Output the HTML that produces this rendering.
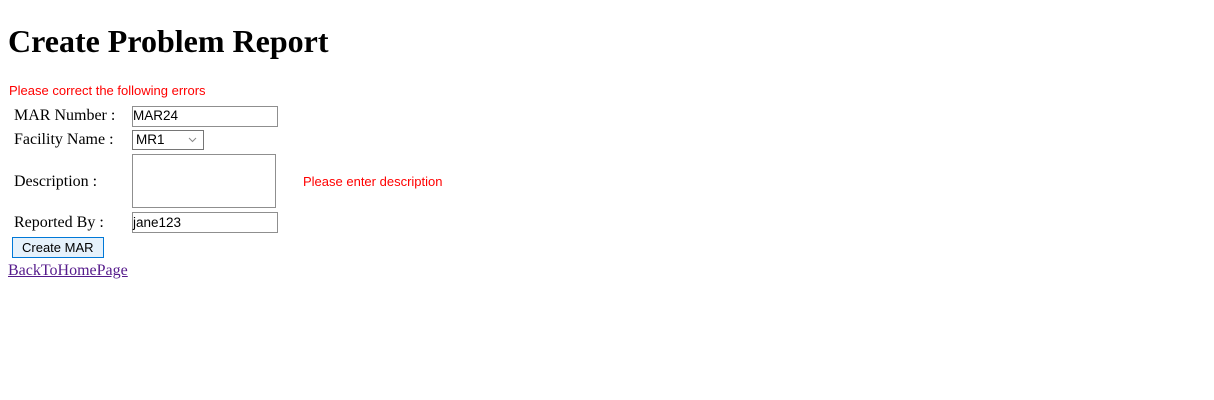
<!DOCTYPE html>
<html><head><style>
body{margin:0;width:1214px;height:400px;background:#fff;font-family:"Liberation Serif",serif;position:relative;overflow:hidden}
.a{position:absolute;white-space:nowrap}
h1{position:absolute;left:8px;top:22px;margin:0;font-size:32px;font-weight:bold;line-height:38px}
.s{font-family:"Liberation Sans",sans-serif;font-size:13px}
.lbl{font-size:16px;line-height:18px}
.box{position:absolute;border:1px solid #767676;box-sizing:border-box;background:#fff}
</style></head><body>
<h1>Create Problem Report</h1>
<div class="a s" style="left:9px;top:83px;color:#f00">Please correct the following errors</div>
<div class="a lbl" style="left:14px;top:107px">MAR Number :</div>
<div class="box" style="left:132px;top:106px;width:146px;height:21px;border-color:#8f8f8f"></div>
<div class="a s" style="left:133px;top:108px;font-size:13.5px">MAR24</div>
<div class="a lbl" style="left:14px;top:131px">Facility Name :</div>
<div class="box" style="left:132px;top:130px;width:72px;height:20px"></div>
<div class="a s" style="left:136px;top:132px;font-size:13.5px">MR1</div>
<svg class="a" style="left:188px;top:137px" width="9" height="6"><path d="M1 1L4.5 4.5L8 1" stroke="#888" fill="none"/></svg>
<div class="a lbl" style="left:14px;top:173px">Description :</div>
<div class="box" style="left:132px;top:154px;width:144px;height:54px;border-color:#8f8f8f"></div>
<div class="a s" style="left:303px;top:174px;color:#f00">Please enter description</div>
<div class="a lbl" style="left:14px;top:214px">Reported By :</div>
<div class="box" style="left:132px;top:212px;width:146px;height:21px;border-color:#8f8f8f"></div>
<div class="a s" style="left:133px;top:215px;font-size:13.5px">jane123</div>
<div class="box" style="left:12px;top:237px;width:92px;height:21px;background:#e5f1fb;border-color:#0078d7"></div>
<div class="a s" style="left:22px;top:240px;font-size:13px">Create MAR</div>
<a class="a" style="left:8px;top:262px;font-size:16px;color:#551a8b;text-decoration:underline">BackToHomePage</a>
</body></html>
